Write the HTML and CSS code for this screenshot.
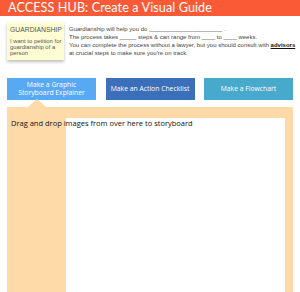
FILE: index.html
```html
<!DOCTYPE html>
<html lang="en">
<head>
  <meta charset="UTF-8" />
  <title>Access Hub</title>
  <link rel="stylesheet" href="styles.css">
</head>
<body>
  <div class="header">ACCESS HUB: Create a Visual Guide</div>

  <div class="intro">
    <div class="sticky">
      <div class="sticky-title">GUARDIANSHIP</div>
      <div class="sticky-text">I want to petition for guardianship of a person</div>
    </div>
    <div class="summary">
      <p>Guardianship will help you do ______________________ .</p>
      <p>The process takes _____ steps &amp; can range from ____ to ____ weeks.</p>
      <p>You can complete the process without a lawyer, but you should consult with <b>advisors</b></p>
      <p>at crucial steps to make sure you're on track.</p>
    </div>
  </div>

  <div class="actions">
    <div class="btn btn-story active">Make a Graphic<br>Storyboard Explainer</div>
    <div class="btn btn-check">Make an Action Checklist</div>
    <div class="btn btn-flow">Make a Flowchart</div>
  </div>

  <div class="board">
    <div class="drop-hint">Drag and drop images from over here to storyboard</div>
    <div class="canvas"></div>
  </div>
</body>
</html>
```

FILE: styles.css
```css
html, body {
  margin: 0;
  padding: 0;
  width: 300px;
  height: 292px;
  overflow: hidden;
  background: #fff;
  font-family: 'Liberation Sans', Arial, sans-serif;
}

.header {
  height: 16px;
  line-height: 16px;
  padding-left: 8px;
  background: #fb5a37;
  color: #fff;
  font-family: 'Lato', sans-serif;
  font-size: 12.6px;
  letter-spacing: 0.1px;
}

.intro {
  display: flex;
  padding: 6px 0 0 7px;
  height: 56px;
}

.sticky {
  flex: none;
  width: 53px;
  height: 36px;
  padding: 2px 1px 0 3px;
  background: #fefcd2;
  box-shadow: 0 2px 3px rgba(0,0,0,0.25);
  color: #555;
}

.sticky-title {
  font-size: 6.8px;
  margin-top: 2px;
  margin-bottom: 5px;
}

.sticky-text {
  font-size: 5.9px;
  line-height: 6px;
}

.summary {
  flex: none;
  margin-left: 5px;
  padding-top: 3px;
  color: #444;
  font-size: 6px;
}

.summary p {
  margin: 0;
  line-height: 8px;
  white-space: nowrap;
}

.summary b {
  color: #111;
  text-decoration: underline;
}

.actions {
  display: flex;
  justify-content: space-between;
  padding: 0 7px;
}

.btn {
  width: 89px;
  height: 22px;
  display: flex;
  align-items: center;
  justify-content: center;
  text-align: center;
  color: #fff;
  font-family: 'Open Sans', sans-serif;
  font-size: 6.8px;
  line-height: 8px;
  position: relative;
}

.btn-story { background: #58a9f3; }
.btn-check { background: #3c6fb9; }
.btn-flow { background: #47a9cb; }

.btn.active::after {
  content: "";
  position: absolute;
  left: 21px;
  top: 21px;
  border-left: 9px solid transparent;
  border-right: 9px solid transparent;
  border-bottom: 8px solid #fedaa8;
}

.board {
  position: relative;
  margin: 7px 7px 0;
  padding: 11px 8px 0 59px;
  height: 174px;
  background: #fedaa8;
}

.canvas {
  height: 100%;
  background: #fff;
}

.drop-hint {
  position: absolute;
  top: 11px;
  left: 4px;
  font-family: 'Open Sans', sans-serif;
  font-size: 7.5px;
  color: #111;
}
```
